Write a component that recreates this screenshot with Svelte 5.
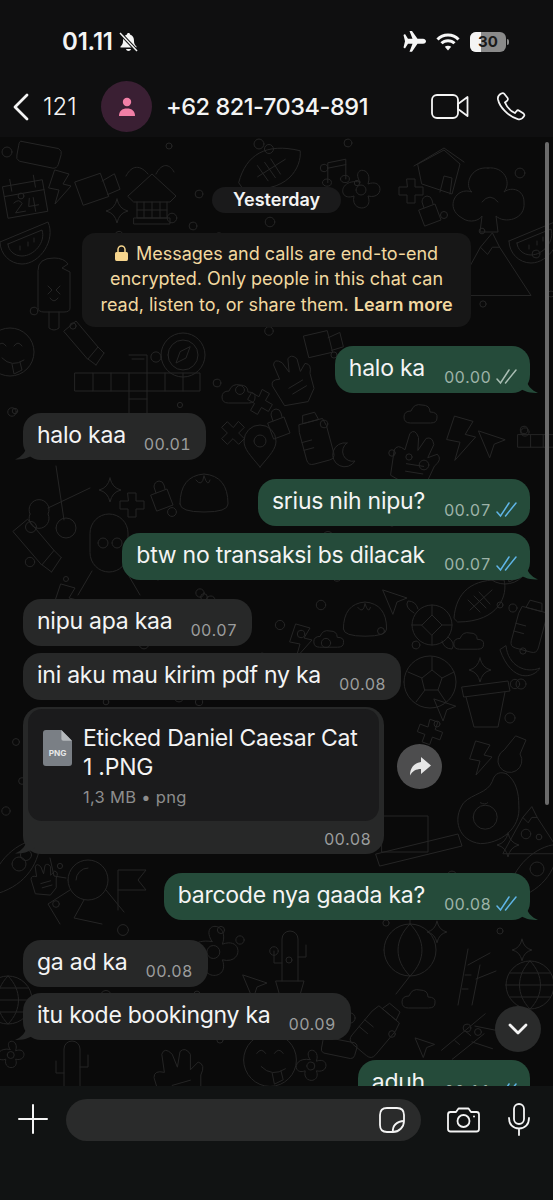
<svelte:options runes={true} />
<script lang="ts">
  type Msg = { kind: 'in' | 'out'; text: string; time: string; tail?: boolean; tight?: boolean; read?: boolean };

  const before: Msg[] = [
    { kind: 'out', text: 'halo ka', time: '00.00', tail: true },
    { kind: 'in', text: 'halo kaa', time: '00.01', tail: true },
    { kind: 'out', text: 'srius nih nipu?', time: '00.07', read: true },
    { kind: 'out', text: 'btw no transaksi bs dilacak', time: '00.07', tail: true, tight: true, read: true },
    { kind: 'in', text: 'nipu apa kaa', time: '00.07' },
    { kind: 'in', text: 'ini aku mau kirim pdf ny ka', time: '00.08', tight: true }
  ];
  const after: Msg[] = [
    { kind: 'out', text: 'barcode nya gaada ka?', time: '00.08', tail: true, read: true },
    { kind: 'in', text: 'ga ad ka', time: '00.08' },
    { kind: 'in', text: 'itu kode bookingny ka', time: '00.09', tail: true, tight: true },
    { kind: 'out', text: 'aduh', time: '00.11', read: true }
  ];

  // wallpaper doodles, drawn around 0,0 and placed by hand
  const shapes: Record<string, string> = {
    hut: 'M-24 -2 L0 -24 L24 -2 L18 4 L-18 4 Z M-15 4 V20 H15 V4 M-15 12 H15 M0 4 V20 M-8 4 V20 M8 4 V20 M-18 20 H18 V26 H-18 Z M-4 -24 C-14 -36 -22 -30 -26 -22 M4 -24 C10 -36 18 -34 22 -26',
    grid: 'M-60 -22 L-42 -22 L-42 -4 L-60 -4 Z M-42 -22 H65 V-4 H-42 M-24 -22 V-4 M-6 -22 V22 H12 V-4 M12 -22 V-4 M30 -22 V-4 M48 -22 V-4 M-6 -40 H12 V-22 M-6 4 H12 M-3 -36 H9',
    compass: 'M-22 0 A22 22 0 1 0 22 0 A22 22 0 1 0 -22 0 M-15 0 A15 15 0 1 0 15 0 A15 15 0 1 0 -15 0 M7 -8 L3 3 L-7 8 L-3 -3 Z',
    bottle: 'M-6 -24 H6 L8 -16 H-8 Z M-12 -16 H12 L14 -8 V20 Q14 26 8 26 H-8 Q-14 26 -14 20 V-8 Z M-14 2 H-4 M-14 10 H-4',
    bolt: 'M-4 -16 L10 -12 L4 -2 L12 0 L-4 18 L0 4 L-10 2 Z',
    cross: 'M-4 -12 H4 V-4 H12 V4 H4 V12 H-4 V4 H-12 V-4 H-4 Z',
    lock: 'M-9 -2 L7 -8 L13 8 L-3 14 Z M-4 -4 L-6 -10 Q-6 -15 -1 -16 Q3 -16 4 -12 L5 -8',
    star: 'M0 -12 Q2 -2 11 0 Q2 2 0 12 Q-2 2 -11 0 Q-2 -2 0 -12 Z',
    cloud: 'M-12 8 Q-18 8 -18 2 Q-18 -4 -11 -4 Q-8 -12 0 -10 Q8 -10 8 -3 Q16 -3 15 3 Q15 8 9 8 Z',
    pin: 'M0 20 C-10 8 -16 2 -16 -6 A16 16 0 1 1 16 -6 C16 2 10 8 0 20 Z M-6 -6 A6 6 0 1 0 6 -6 A6 6 0 1 0 -6 -6',
    plane: 'M-12 -10 L12 -2 L2 2 L-2 14 Z',
    moon: 'M4 -12 A12 12 0 1 0 12 6 A10 10 0 0 1 4 -12 Z',
    flower: 'M0 -8 C-10 -24 14 -24 8 -6 C24 -12 24 10 8 6 C14 22 -10 22 -6 6 C-22 12 -22 -12 0 -8 Z M-4 0 A5 5 0 1 0 6 0 A5 5 0 1 0 -4 0',
    bigflower: 'M0 -32 C-18 -34 -24 -14 -16 -8 C-32 -14 -44 8 -26 18 C-18 24 -8 20 -6 16 L-8 32 H10 L8 16 C16 24 38 20 36 2 C36 -10 24 -14 16 -8 C24 -18 16 -34 0 -32 Z M-6 2 Q2 -8 10 2',
    football: 'M-26 16 C-24 -10 -8 -24 24 -22 C28 -8 20 20 -22 20 Z M-10 8 L12 -12 M-6 -6 L6 6 M-1 -10 L10 2 M-12 -2 L0 10',
    turtle: 'M-18 0 A20 20 0 1 0 22 0 A20 20 0 1 0 -18 0 M-8 0 L2 -10 L12 0 L2 10 Z M2 -10 V-20 M2 10 V20 M-8 0 H-18 M12 0 H22 M-16 -12 Q-26 -18 -22 -24 Q-14 -24 -12 -16 M18 12 Q26 18 22 24 Q14 24 12 16',
    soccer: 'M-26 0 A26 26 0 1 0 26 0 A26 26 0 1 0 -26 0 M-8 -4 L2 -12 L12 -4 L8 8 L-5 8 Z M2 -12 V-25 M-8 -4 L-22 -10 M12 -4 L24 -10 M-5 8 L-14 20 M8 8 L16 20',
    pot: 'M-24 -18 L22 -24 L24 -14 L-22 -8 Z M-20 -8 L-12 22 H12 L19 -13',
    avocado: 'M14 -30 C22 -24 24 -14 24 -4 C26 16 8 28 -8 28 C-26 26 -32 8 -22 -6 C-14 -14 -2 -14 2 -24 C4 -32 10 -32 14 -30 Z M-14 6 A10 10 0 1 0 6 6 A10 10 0 1 0 -14 6 M-8 -6 Q-4 -4 -2 -6',
    mountain: 'M-30 26 L-8 -14 L2 -26 L8 -14 L34 26 Z M-8 -14 L-2 -8 L2 -14 L8 -14',
    lantern: 'M-26 0 A26 26 0 1 0 26 0 A26 26 0 1 0 -26 0 M0 -26 C-16 -10 -16 10 0 26 C16 10 16 -10 0 -26 M0 -26 V-32 M0 26 L-14 44',
    astro: 'M-20 0 A20 20 0 1 0 20 0 A20 20 0 1 0 -20 0 M-12 0 A12 12 0 0 1 0 -12 M-18 10 L-40 24 L-28 44 M18 10 L36 32 M-38 -22 L-34 -4 L-22 -2 M-4 20 L-14 38 L14 44',
    flag: 'M-12 22 V-18 L16 -18 L8 -8 L16 2 H-12',
    rocket: 'M24 -30 C4 -26 -18 -6 -22 26 C8 20 26 2 30 -24 Z M2 -6 A7 7 0 1 0 16 -6 A7 7 0 1 0 2 -6',
    globe: 'M-24 0 A24 24 0 1 0 24 0 A24 24 0 1 0 -24 0 M-24 0 H24 M-20 -12 H20 M-20 12 H20 M0 -24 C-14 -10 -14 10 0 24 C14 10 14 -10 0 -24',
    smile: 'M-24 0 A24 24 0 1 0 24 0 A24 24 0 1 0 -24 0 M-12 -6 Q-8 -12 -4 -6 M4 -6 Q8 -12 12 -6 M-8 6 Q2 16 14 8 M2 12 L4 22 L12 18 L10 10',
    pop: 'M-16 -22 Q-16 -34 0 -34 Q10 -34 14 -28 L8 -24 L16 -20 V16 Q16 20 10 20 H-10 Q-16 20 -16 16 Z M-5 20 V36 Q0 40 5 36 V20 M-6 -6 L-2 -2 L-6 2 M6 -6 L2 -2 L6 2 M-4 6 Q0 12 4 6',
    melon: 'M-26 -4 L22 -24 C30 -6 14 18 -4 18 C-16 18 -26 8 -26 -4 Z M-18 -2 L16 -16 C20 -4 8 10 -4 10 C-12 10 -18 4 -18 -2 Z M-6 0 V4 M2 -4 V0 M8 -8 V-4',
    calendar: 'M-20 -14 H20 V18 H-20 Z M-20 -4 H20 M-12 -20 V-8 M12 -20 V-8 M-12 4 Q-6 0 -4 6 L-12 14 H-2 M4 2 L2 10 H12 M8 2 V16',
    video: 'M-18 -10 L8 -16 L14 8 L-12 14 Z M9 -8 L22 -14 L26 2 L13 6',
    card: 'M-20 -12 L18 -8 Q22 -6 21 -2 L19 8 Q18 12 14 12 L-20 8 Q-24 6 -23 2 L-22 -8 Q-22 -12 -20 -12 Z',
    house: 'M-20 -6 L6 -20 L22 -6 L14 24 L-16 14 Z M-24 -4 L6 -22 L26 -8 M2 22 L6 6 L14 8 L12 24',
    music: 'M-8 14 V-8 L12 -12 V10 M-14 14 A5 4 0 1 0 -4 14 A5 4 0 1 0 -14 14 M6 10 A5 4 0 1 0 16 10 A5 4 0 1 0 6 10 M-8 -2 L12 -6',
    hand: 'M-14 22 L-20 2 Q-20 -4 -12 -2 L-14 -16 Q-12 -22 -6 -16 L-2 -6 L0 -18 Q4 -22 8 -16 L8 -4 L14 -10 Q20 -8 16 0 L16 14 L8 24 Z M-6 8 L8 4 M-4 14 L10 10',
    scissors: 'M-30 24 A10 10 0 1 0 -12 24 A10 10 0 1 0 -30 24 M-4 38 A10 10 0 1 0 16 38 A10 10 0 1 0 -4 38 M-12 18 L30 -2 M4 30 L-4 -24',
    tube: 'M-24 -14 L-12 -24 L10 2 L0 14 Z M0 14 L8 20 M10 2 L16 8 M8 20 L16 8',
    person: 'M-20 -12 A18 18 0 0 1 18 -12 V8 A18 18 0 0 1 -20 8 Z M-12 -2 A5 5 0 1 0 -2 -2 A5 5 0 1 0 -12 -2 M2 -2 A5 5 0 1 0 12 -2 A5 5 0 1 0 2 -2 M-18 26 L-32 50 M16 26 L30 50',
    dump: 'M-24 10 Q-24 -18 0 -20 Q24 -18 24 10 Q24 18 0 18 Q-24 18 -24 10 Z M-8 -14 Q-2 -6 0 -18 M6 -14 Q4 -6 0 -18',
    cactus: 'M-8 26 V-16 A8 8 0 0 1 8 -16 V26 M8 2 H16 V-10 M-8 8 H-16 V-4 M-14 26 H14 L10 40 H-10 Z',
    bamboo: 'M-12 30 L-2 -26 M2 30 L10 -10 M-5 0 H1 M-8 14 H-2 M-2 -10 L20 -22 M6 4 L26 -4',
    banana: 'M-14 -14 C-12 6 6 14 20 8 C14 18 -8 24 -20 -10 Z',
    key: 'M4 -24 L14 -20 L8 -6 A12 12 0 1 1 -8 -10 Z',
    laptop: 'M-38 -24 H8 V12 H-38 Z M-44 14 L38 -6 L42 6 L-40 26 Z'
  };

  const doodles: [string, number, number, number?, number?][] = [
    ['card', 40, 155, 1, 5], ['calendar', 25, 197, 1, -10], ['bolt', 59, 186, 1], ['video', 94, 190, 1, -6],
    ['melon', 26, 246, 1], ['pop', 54, 292, 1], ['hut', 152, 198, 1], ['star', 117, 211, 1],
    ['football', 270, 170, 1.1, 10], ['house', 438, 170, 1], ['music', 335, 170, 0.9], ['flower', 360, 190, 1],
    ['bigflower', 488, 200, 1], ['cross', 411, 191, 1], ['lock', 428, 212, 1], ['mountain', 490, 264, 1.2],
    ['melon', 535, 245, 1], ['smile', 10, 352, 1], ['tube', 88, 345, 1], ['grid', 135, 395, 1],
    ['compass', 183, 355, 1], ['video', 320, 345, 0.9], ['hand', 293, 378, 1.1, -15], ['cloud', 240, 395, 1],
    ['cross', 260, 402, 1, 30], ['bottle', 315, 437, 1, -15], ['pin', 260, 447, 1], ['moon', 343, 455, 1],
    ['cross', 233, 433, 1, 45], ['lock', 277, 425, 1], ['hand', 417, 458, 1.2, 25], ['cloud', 422, 415, 1],
    ['bolt', 460, 437, 1.3], ['plane', 492, 442, 1.1], ['grid', 560, 450, 0.7], ['scissors', 60, 490, 1],
    ['star', 110, 490, 1], ['cross', 132, 505, 1], ['lock', 160, 497, 1], ['dump', 204, 494, 1],
    ['tube', 42, 548, 1.2], ['person', 110, 545, 1], ['smile', 505, 560, 1], ['bolt', 65, 600, 1],
    ['plane', 395, 600, 1], ['dump', 365, 620, 0.9], ['turtle', 430, 625, 1], ['football', 480, 602, 1],
    ['bolt', 300, 640, 1], ['cloud', 330, 640, 0.9], ['cloud', 470, 642, 0.9], ['soccer', 430, 682, 1],
    ['star', 480, 670, 1], ['pot', 486, 705, 1], ['bottle', 530, 625, 1, 15], ['banana', 520, 660, 1],
    ['cross', 430, 732, 1, 20], ['plane', 445, 708, 0.9], ['bolt', 480, 757, 1], ['key', 512, 760, 1],
    ['avocado', 490, 810, 1.2], ['mountain', 530, 830, 0.9], ['laptop', 420, 840, 1], ['star', 508, 845, 1],
    ['rocket', 10, 870, 1], ['astro', 88, 880, 1], ['flag', 130, 888, 1], ['hand', 45, 878, 0.7],
    ['rocket', 528, 875, 1], ['flower', 212, 952, 1.3], ['cactus', 290, 955, 1], ['lantern', 410, 950, 1],
    ['star', 437, 932, 0.9], ['star', 522, 950, 0.9], ['bamboo', 470, 975, 1], ['globe', 530, 985, 1],
    ['globe', 8, 1000, 1], ['plane', 255, 985, 1], ['cloud', 420, 1000, 1], ['cactus', 72, 1065, 1],
    ['hand', 180, 1075, 1.3], ['smile', 270, 1060, 1.1], ['flower', 310, 1066, 0.8], ['card', 340, 1048, 0.8, 5],
    ['bottle', 378, 1028, 1.1, 40], ['plane', 425, 1046, 0.8], ['bamboo', 470, 1035, 1, 40], ['flower', 10, 1055, 0.7]
  ];

  // scattered dots between the doodles
  let seed = 17;
  const rnd = () => (seed = (seed * 1103 + 12345) % 65536) / 65536;
  const dots = Array.from({ length: 130 }, () => ({
    x: Math.round(rnd() * 553),
    y: Math.round(137 + rnd() * 949),
    r: 2.5 + rnd() * 3
  }));
</script>

{#snippet bubble(m: Msg)}
  <div class="row {m.kind}" class:tight={m.tight}>
    <div class="bubble" class:tail={m.tail}>
      <span class="text">{m.text}</span>
      <span class="meta">
        <span class="time">{m.time}</span>
        {#if m.kind === 'out'}
          <svg class="ticks" class:read={m.read} width="22" height="18" viewBox="0 0 22 18" fill="none" stroke="currentColor" stroke-width="1.500" stroke-linecap="round">
            <path d="M1 11 L4.500 15 L13 2" />
            <path d="M9.500 15 L20 2" />
          </svg>
        {/if}
      </span>
    </div>
  </div>
{/snippet}

<div class="phone">
  <header>
    <div class="status">
      <div class="clock">
        <span>01.11</span>
        <svg width="19" height="20" viewBox="0 0 19 20" fill="#f4f4f4">
          <path d="M9.500 1 C10.500 1 11 1.700 11 2.500 C14 3.300 15 6 15 9 C15 12 16 13 17.500 14.500 V15.500 H1.500 V14.500 C3 13 4 12 4 9 C4 6 5 3.300 8 2.500 C8 1.700 8.500 1 9.500 1 Z M7 17 H12 C11.700 18.300 10.700 19 9.500 19 C8.300 19 7.300 18.300 7 17 Z" />
          <path d="M1 1 L18 19" stroke="#0f1010" stroke-width="3.500" />
          <path d="M1 1 L18 19" stroke="#f4f4f4" stroke-width="1.500" />
        </svg>
      </div>
      <div class="sys">
        <svg width="23" height="21" viewBox="0 0 23 21" fill="#f6f6f6">
          <path d="M0.500 4 L2 3 L5 7.800 H9.500 L6.500 0 H9 L14.500 7.800 H20 C22 7.800 23 9.300 23 10.300 C23 11.300 22 12.800 20 12.800 H14.500 L9 20.800 H6.500 L9.500 12.800 H5 L2 17.600 L0.500 16.600 L2 10.300 Z" />
        </svg>
        <svg width="24" height="18" viewBox="0 0 24 18" fill="none" stroke="#f6f6f6" stroke-width="3">
          <path d="M1.500 6.500 C7 0.500 17 0.500 22.500 6.500" />
          <path d="M5.500 10.300 C9 6.800 15 6.800 18.500 10.300" />
          <path d="M12 17.500 L8.800 13.800 C10.500 12.400 13.500 12.400 15.200 13.800 Z" fill="#f6f6f6" stroke="none" />
        </svg>
        <div class="battery"><span class="level"></span><span class="num">30</span><i></i></div>
      </div>
    </div>
    <nav>
      <svg class="back" width="18" height="28" viewBox="0 0 18 28" fill="none" stroke="#f4f4f4" stroke-width="2.800" stroke-linecap="round" stroke-linejoin="round">
        <path d="M15 2 L3 14 L15 26" />
      </svg>
      <span class="count">121</span>
      <div class="avatar">
        <svg width="20" height="20" viewBox="0 0 20 20" fill="#f27fa6">
          <circle cx="10" cy="5" r="4.200" />
          <path d="M2 19 C2 14 5 11.500 10 11.500 C15 11.500 18 14 18 19 Z" />
        </svg>
      </div>
      <span class="name">+62 821-7034-891</span>
      <svg class="video" width="38" height="25" viewBox="0 0 38 25" fill="none" stroke="#f4f4f4" stroke-width="1.800" stroke-linejoin="round">
        <rect x="1" y="1" width="26" height="23" rx="5" />
        <path d="M27 10 L36.500 3 V22 L27 15 Z" />
      </svg>
      <svg class="call" width="30" height="29" viewBox="0 0 30 30" fill="none" stroke="#f4f4f4" stroke-width="1.800" stroke-linejoin="round">
        <path d="M5 1.500 C3 2.500 1 4.500 1.500 7.500 C3 15 12 25.500 22 28 C25 28.800 27.500 27 28.800 24.500 C29 23.500 28.800 23 28 22.300 L23.500 19.300 C22.500 18.700 21.500 18.800 20.800 19.700 L19 21.800 C14.500 19.700 10.500 15 8.700 10.800 L11 9 C11.800 8.300 12 7.300 11.500 6.300 L8 1.800 C7.300 1 6 1 5 1.500 Z" />
      </svg>
    </nav>
  </header>

  <main>
    <svg class="wall" width="553" height="949" viewBox="0 137 553 949" fill="none" stroke="#252525" stroke-width="1" stroke-linejoin="round" stroke-linecap="round">
      {#each dots as d}
        <circle cx={d.x} cy={d.y} r={d.r} />
      {/each}
      {#each doodles as [kind, x, y, s, r]}
        <path d={shapes[kind]} transform="translate({x} {y}) rotate({r ?? 0}) scale({s ?? 1})" vector-effect="non-scaling-stroke" />
      {/each}
    </svg>

    <div class="thread">
      <div class="day">Yesterday</div>
      <div class="notice">
        <svg width="13" height="16" viewBox="0 0 13 16" fill="#f6d58d">
          <path d="M1.500 7 H11.500 Q13 7 13 8.500 V14 Q13 16 11.500 16 H1.500 Q0 16 0 14 V8.500 Q0 7 1.500 7 Z" />
          <path d="M3 7 V4.500 A3.500 3.500 0 0 1 10 4.500 V7" fill="none" stroke="#f6d58d" stroke-width="1.500" />
        </svg>
        Messages and calls are end-to-end<br />encrypted. Only people in this chat can<br />read, listen to, or share them. <b>Learn more</b>
      </div>

      {#each before as m}
        {@render bubble(m)}
      {/each}

      <div class="row in docrow">
        <div class="bubble doc tail">
          <div class="file">
            <svg class="fileicon" width="29" height="36" viewBox="0 0 30 37">
              <path d="M3 0 H19 L30 11 V34 Q30 37 27 37 H3 Q0 37 0 34 V3 Q0 0 3 0 Z" fill="#7a7f85" />
              <path d="M19 0 L30 11 H21 Q19 11 19 9 Z" fill="#b6babd" />
              <text x="15" y="27" text-anchor="middle" font-size="8.500" font-weight="700" fill="#e8e8e8" font-family="Inter, sans-serif">PNG</text>
            </svg>
            <div class="fileinfo">
              <div class="filename">Eticked Daniel Caesar Cat<br />1 .PNG</div>
              <div class="filemeta">1,3 MB • png</div>
            </div>
          </div>
          <div class="doctime">00.08</div>
        </div>
        <div class="forward">
          <svg width="22" height="19" viewBox="0 0 22 19" fill="#e6e6e6">
            <path d="M12 0 L22 8.500 L12 17 V12 C7 12 3.500 14 1 18.500 C1 11 5 6 12 5 Z" />
          </svg>
        </div>
      </div>

      {#each after as m}
        {@render bubble(m)}
      {/each}
    </div>

    <div class="scrollbar"></div>
    <div class="down">
      <svg width="20" height="12" viewBox="0 0 20 12" fill="none" stroke="#f4f4f4" stroke-width="2.800" stroke-linecap="round" stroke-linejoin="round">
        <path d="M2 2 L10 10 L18 2" />
      </svg>
    </div>
  </main>

  <footer>
    <svg width="30" height="30" viewBox="0 0 30 30" stroke="#f4f4f4" stroke-width="2" stroke-linecap="round">
      <path d="M15 1 V29 M1 15 H29" />
    </svg>
    <div class="input">
      <svg width="26" height="26" viewBox="0 0 26 26" fill="none" stroke="#f4f4f4" stroke-width="1.800" stroke-linejoin="round">
        <path d="M8 1 H18 Q25 1 25 8 V14 C25 20 20 25 14 25 H8 Q1 25 1 18 V8 Q1 1 8 1 Z" />
        <path d="M14 25 C13 19 18 14 25 14" />
      </svg>
    </div>
    <svg class="cam" width="33" height="26" viewBox="0 0 33 26" fill="none" stroke="#f4f4f4" stroke-width="1.800" stroke-linejoin="round">
      <path d="M3.500 5 H9 L11.500 1.500 H21.500 L24 5 H29.500 Q32 5 32 7.500 V22 Q32 24.500 29.500 24.500 H3.500 Q1 24.500 1 22 V7.500 Q1 5 3.500 5 Z" />
      <circle cx="16.500" cy="14" r="6" />
      <circle cx="27" cy="9.500" r="1" fill="#f4f4f4" stroke="none" />
    </svg>
    <svg class="mic" width="22" height="33" viewBox="0 0 22 33" fill="none" stroke="#f4f4f4" stroke-width="1.800" stroke-linecap="round">
      <rect x="6" y="1" width="10" height="20" rx="5" />
      <path d="M1 15 C1 21.500 5 25.500 11 25.500 C17 25.500 21 21.500 21 15 M11 25.500 V32" />
    </svg>
  </footer>
</div>

<style>
  :global(body) { margin: 0; background: #0f1010; }
  .phone {
    width: 553px; height: 1200px; display: flex; flex-direction: column; overflow: hidden;
    font-family: Inter, "Noto Sans", sans-serif; color: #f4f4f4; background: #0f1010;
  }

  header { height: 137px; flex: none; background: #0f0f10; }
  .status { height: 81px; display: flex; justify-content: space-between; align-items: center; padding: 31px 47px 29px 62px; box-sizing: border-box; }
  .clock { display: flex; align-items: center; gap: 6px; font-size: 24px; font-weight: 600; line-height: 24px; letter-spacing: -0.2px; }
  .sys { display: flex; align-items: center; gap: 10px; }
  .battery { position: relative; width: 36px; height: 20px; border-radius: 6px; background: #8a8a8a; }
  .level { position: absolute; left: 0; top: 0; bottom: 0; width: 11px; background: #f4f4f4; border-radius: 6px 0 0 6px; }
  .num { position: absolute; inset: 0; text-align: center; font-size: 15px; line-height: 20px; font-weight: 700; color: #1a1a1a; }
  .battery i { position: absolute; right: -3px; top: 7px; width: 2px; height: 6px; background: #8a8a8a; border-radius: 0 2px 2px 0; }

  nav { height: 51px; display: flex; align-items: center; padding-left: 12px; }
  .count { font-size: 24px; font-weight: 300; margin-left: 13px; width: 58px; }
  .avatar { width: 51px; height: 51px; border-radius: 50%; background: #3a1f33; display: flex; align-items: center; justify-content: center; flex: none; }
  .name { font-size: 23.500px; font-weight: 500; letter-spacing: -0.45px; margin-left: 14px; width: 265px; white-space: nowrap; }
  .video { flex: none; }
  .call { flex: none; margin-left: 27px; }

  main { position: relative; flex: none; height: 949px; overflow: hidden; background: #0a0a0a; }
  .wall { position: absolute; left: 0; top: 0; }
  .thread { position: relative; display: flex; flex-direction: column; padding: 49.500px 23px 0; }

  .day {
    align-self: center; height: 26px; line-height: 26px; padding: 0 21px; border-radius: 13px;
    background: #1a1a1b; font-size: 18px; font-weight: 600;
  }
  .notice {
    align-self: center; box-sizing: border-box; width: 389px; height: 94px; margin-top: 20px; padding: 8px 10px;
    border-radius: 13px; background: #171717; color: #f2d9a0; font-size: 18px; line-height: 25.500px; text-align: center; white-space: nowrap;
  }
  .notice b { font-weight: 600; }
  .notice svg { margin-right: 3px; vertical-align: -1px; }

  .row { display: flex; margin-top: 19.500px; }
  .row.tight { margin-top: 6.500px; }
  .row.docrow { margin-top: 7px; }
  .row.out { justify-content: flex-end; }
  .bubble {
    position: relative; box-sizing: border-box; display: flex; height: 47px; padding: 0 15px 0 14px; gap: 18px;
    border-radius: 18px; background: #272828;
  }
  .out .bubble { background: #254b3a; padding-right: 12px; gap: 19px; }
  .text { font-size: 23px; letter-spacing: -0.25px; line-height: 44px; white-space: nowrap; }
  .meta { display: flex; align-items: center; gap: 5px; height: 18px; margin-top: 22px; }
  .time { font-size: 16px; color: #9b9d9d; letter-spacing: 0.25px; font-variant-numeric: tabular-nums; }
  .out .time { color: #9db3a8; }
  .ticks { color: #a9bdb3; }
  .ticks.read { color: #5fb4e6; }

  .tail::after {
    content: ""; position: absolute; bottom: 0; width: 20px; height: 14px; background: inherit;
  }
  .out .tail::after { right: -8px; clip-path: path("M0 0 H8 C9 6 13 11 20 14 C13 14 6 13 0 8 Z"); }
  .in .tail::after { left: -8px; clip-path: path("M12 0 H20 V8 C14 13 7 14 0 14 C7 11 11 6 12 0 Z"); }

  .doc { display: block; width: 361px; height: 147px; padding: 2px 5px 0; }
  .file { display: flex; box-sizing: border-box; height: 112px; padding: 15px 15px 0; gap: 11px; border-radius: 14px; background: #1b1b1c; }
  .fileicon { flex: none; margin-top: 6px; }
  .filename { font-size: 23px; letter-spacing: -0.25px; line-height: 29px; white-space: nowrap; }
  .filemeta { font-size: 16.500px; color: #8d8d8d; margin-top: 5px; letter-spacing: 0.3px; }
  .doctime { text-align: right; font-size: 16px; color: #9b9d9d; margin: 8px 8px 0 0; letter-spacing: 0.25px; font-variant-numeric: tabular-nums; }
  .forward {
    width: 45px; height: 45px; border-radius: 50%; background: #4d4d4e; margin: 37px 0 0 13px;
    display: flex; align-items: center; justify-content: center;
  }

  .scrollbar { position: absolute; left: 545px; top: 5px; width: 4px; height: 663px; border-radius: 2px; background: #6b6b6b; }
  .down {
    position: absolute; left: 495px; top: 869px; width: 46px; height: 46px; border-radius: 50%; background: #2a2b2b;
    display: flex; align-items: center; justify-content: center;
  }

  footer { flex: 1; display: flex; align-items: flex-start; background: #111313; padding: 13px 0 0 18px; }
  footer > svg { flex: none; margin-top: 5px; }
  .input {
    box-sizing: border-box; width: 355px; height: 42px; margin-left: 18px; border-radius: 21px; background: #2a2b2b;
    display: flex; align-items: center; justify-content: flex-end; padding-right: 16px;
  }
  footer > .cam { margin: 8px 0 0 26px; }
  footer > .mic { margin: 4px 0 0 28px; }
</style>
